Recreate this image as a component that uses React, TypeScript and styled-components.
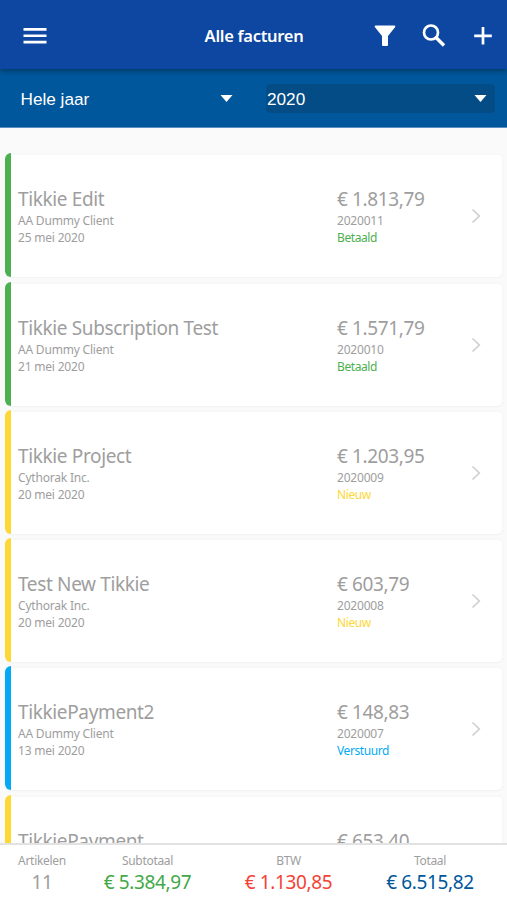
import React from 'react';
import styled, { createGlobalStyle } from 'styled-components';

const Global = createGlobalStyle`
  * { box-sizing: border-box; }
  body { margin: 0; overflow: hidden; font-family: "Noto Sans", "Open Sans", sans-serif; }
`;

const Screen = styled.div`
  height: 900px;
  width: 507px;
  display: flex;
  flex-direction: column;
  overflow: hidden;
  background: #fafafa;
`;

const TopBar = styled.header`
  height: 69px;
  flex: none;
  display: grid;
  grid-template-columns: 1fr auto 1fr;
  align-items: center;
  padding: 2px 10px 0 11px;
  background: #0d47a1;
  color: #fff;
  box-shadow: 0 2px 5px rgba(0, 0, 0, 0.35);
  z-index: 1;
`;

const Title = styled.h1`
  margin: 0;
  font-size: 16.5px;
  line-height: 24px;
  font-weight: 600;
  letter-spacing: -0.3px;
`;

const IconButton = styled.button`
  display: flex;
  padding: 0;
  border: 0;
  background: none;
  color: inherit;
`;

const MenuButton = styled(IconButton)`
  padding-left: 12px;
`;

const Actions = styled.div`
  display: flex;
  justify-content: flex-end;
  gap: 21px;
`;

const Filters = styled.div`
  height: 59px;
  flex: none;
  display: grid;
  grid-template-columns: 227px 229px;
  column-gap: 27px;
  align-items: center;
  padding: 0 12px;
  background: #01579b;
  border-bottom: 1px solid #5a8fc0;
`;

const Select = styled.button<{ $active?: boolean }>`
  height: 29px;
  display: flex;
  align-items: center;
  justify-content: space-between;
  border: 0;
  border-radius: 4px;
  padding: ${p => (p.$active ? '1px 8px 0 1px' : '1px 6px 0 8.5px')};
  background: ${p => (p.$active ? '#034c86' : 'transparent')};
  color: #fff;
  font: 17.2px/28px "Liberation Sans", Arial, sans-serif;
`;

const List = styled.main`
  flex: 1;
  min-height: 0;
  overflow: hidden;
  padding: 25.3px 3px 0 5px;
  display: flex;
  flex-direction: column;
  gap: 4.3px;
`;

const Card = styled.article<{ $color: string }>`
  flex: none;
  height: 124px;
  display: grid;
  grid-template-columns: 319px 1fr 14px;
  align-items: center;
  padding: 2px 19px 0 7px;
  border-left: 6px solid ${p => p.$color};
  border-radius: 6px;
  background: #fff;
  box-shadow: inset 0 2px 0 #f8f8f8, inset -2px 0 0 #f8f8f8, 0 1px 1px #f2f2f2;
  color: #9e9e9e;
`;

const Cell = styled.div`
  display: flex;
  flex-direction: column;
  white-space: nowrap;
`;

const Heading = styled.div`
  font-size: 19px;
  line-height: 26px;
  letter-spacing: -0.36px;
`;

const Small = styled.div<{ $color?: string; $spacing?: number }>`
  font-size: 12px;
  line-height: 17px;
  letter-spacing: ${p => p.$spacing ?? -0.2}px;
  color: ${p => p.$color ?? 'inherit'};
`;

const Chevron = styled.svg`
  display: block;
`;

const Footer = styled.footer`
  height: 57px;
  flex: none;
  display: grid;
  grid-template-columns: 84px 127px 155px 128px;
  padding-top: 7px;
  border-top: 2px solid #e2e2e2;
  background: #fff;
  text-align: center;
`;

const Total = styled.div<{ $color: string }>`
  color: #9e9e9e;
  font-size: 12px;
  line-height: 17px;
  letter-spacing: -0.3px;
  white-space: nowrap;
  strong {
    display: block;
    font-size: 19px;
    font-weight: 400;
    line-height: 26px;
    letter-spacing: -0.36px;
    color: ${p => p.$color};
  }
`;

const GREEN = '#4caf50';
const YELLOW = '#fdd835';
const BLUE = '#03a9f4';

const invoices = [
  { name: 'Tikkie Edit', client: 'AA Dummy Client', date: '25 mei 2020', amount: '€ 1.813,79', no: '2020011', status: 'Betaald', color: GREEN },
  { name: 'Tikkie Subscription Test', client: 'AA Dummy Client', date: '21 mei 2020', amount: '€ 1.571,79', no: '2020010', status: 'Betaald', color: GREEN },
  { name: 'Tikkie Project', client: 'Cythorak Inc.', date: '20 mei 2020', amount: '€ 1.203,95', no: '2020009', status: 'Nieuw', color: YELLOW },
  { name: 'Test New Tikkie', client: 'Cythorak Inc.', date: '20 mei 2020', amount: '€ 603,79', no: '2020008', status: 'Nieuw', color: YELLOW },
  { name: 'TikkiePayment2', client: 'AA Dummy Client', date: '13 mei 2020', amount: '€ 148,83', no: '2020007', status: 'Verstuurd', color: BLUE },
  { name: 'TikkiePayment', client: 'Cythorak Inc.', date: '13 mei 2020', amount: '€ 653,40', no: '2020006', status: 'Nieuw', color: YELLOW },
];

const totals = [
  { label: 'Artikelen', value: '11', color: '#9e9e9e' },
  { label: 'Subtotaal', value: '€ 5.384,97', color: '#43a847' },
  { label: 'BTW', value: '€ 1.130,85', color: '#f44336' },
  { label: 'Totaal', value: '€ 6.515,82', color: '#01579b' },
];

const Caret = () => (
  <svg width="13" height="7" viewBox="0 0 13 7" fill="#fff"><path d="M.5 0h12L6.5 7z" /></svg>
);

export default function App() {
  return (
    <Screen>
      <Global />
      <TopBar>
        <MenuButton aria-label="Menu">
          <svg width="24" height="16" viewBox="0 0 24 16" fill="currentColor">
            <path d="M.5 0h23v2.7H.5zM.5 6.4h23v2.7H.5zM.5 12.8h23v2.7H.5z" />
          </svg>
        </MenuButton>
        <Title>Alle facturen</Title>
        <Actions>
          <IconButton aria-label="Filter">
            <svg width="28" height="28" viewBox="0 0 28 28" fill="currentColor">
              <path d="M4.5 3.5h19q1.3.3.7 1.4L17 14v9q0 1-1 1h-4q-1 0-1-1v-9L3.8 4.900q-.6-1.100.7-1.400z" />
            </svg>
          </IconButton>
          <IconButton aria-label="Zoeken">
            <svg width="28" height="28" viewBox="0 0 28 28" fill="none" stroke="currentColor">
              <circle cx="11" cy="10.5" r="7" strokeWidth="2.7" />
              <path d="M16 15.5l8 8" strokeWidth="3.4" />
            </svg>
          </IconButton>
          <IconButton aria-label="Toevoegen">
            <svg width="28" height="28" viewBox="0 0 28 28" stroke="currentColor" strokeWidth="2.7">
              <path d="M14 5v17.6M5.2 13.8h17.6" />
            </svg>
          </IconButton>
        </Actions>
      </TopBar>
      <Filters>
        <Select>Hele jaar<Caret /></Select>
        <Select $active>2020<Caret /></Select>
      </Filters>
      <List>
        {invoices.map(i => (
          <Card key={i.no} $color={i.color}>
            <Cell>
              <Heading>{i.name}</Heading>
              <Small>{i.client}</Small>
              <Small>{i.date}</Small>
            </Cell>
            <Cell>
              <Heading>{i.amount}</Heading>
              <Small>{i.no}</Small>
              <Small $color={i.color} $spacing={-0.4}>{i.status}</Small>
            </Cell>
            <Chevron width="10" height="16" viewBox="0 0 10 16" fill="none" stroke="#d0d0d0" strokeWidth="1.7">
              <path d="M1.5 1.5L8.3 8l-6.8 6.5" />
            </Chevron>
          </Card>
        ))}
      </List>
      <Footer>
        {totals.map(t => (
          <Total key={t.label} $color={t.color}>
            {t.label}
            <strong>{t.value}</strong>
          </Total>
        ))}
      </Footer>
    </Screen>
  );
}
